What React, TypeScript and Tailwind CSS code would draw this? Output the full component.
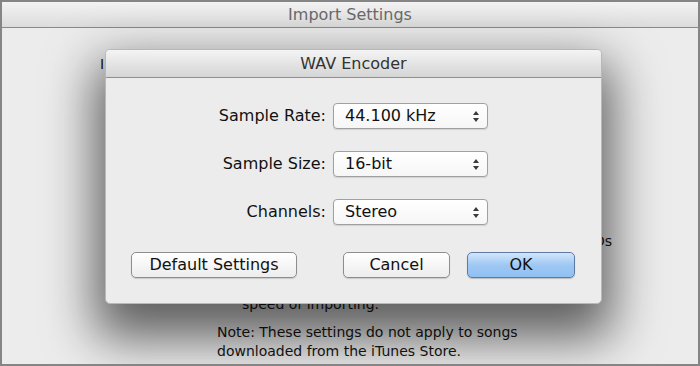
import React from "react";

const rows = [
  { label: "Sample Rate:", value: "44.100 kHz" },
  { label: "Sample Size:", value: "16-bit" },
  { label: "Channels:", value: "Stereo" },
];

const Arrows: React.FC = () => (
  <svg width="8" height="13" viewBox="0 0 8 13" className="shrink-0">
    <path d="M4 1 L7 5 L1 5 Z" fill="#3a3a3a" />
    <path d="M4 12 L7 8 L1 8 Z" fill="#3a3a3a" />
  </svg>
);

const SelectBox: React.FC<{ value: string }> = ({ value }) => (
  <div className="flex h-[26px] w-[155px] items-center justify-between rounded-[4px] border border-[#a0a0a0] bg-gradient-to-b from-white to-[#f6f6f6] pl-[11px] pr-[7px] shadow-[0_1px_1px_rgba(0,0,0,0.12)]">
    <span className="text-[16px] text-[#111]">{value}</span>
    <Arrows />
  </div>
);

const App: React.FC = () => {
  return (
    <div className="relative h-[366px] w-[700px] overflow-hidden border-2 border-[#858585] bg-[#ececec] font-['DejaVu_Sans',sans-serif]">
      {/* back window */}
      <div className="flex h-[26px] items-center justify-center border-b border-[#8a8a8a] bg-gradient-to-b from-[#f3f3f3] to-[#dcdcdc]">
        <span className="text-[16px] text-[#6a6a6a]">Import Settings</span>
      </div>
      <div className="flex flex-col text-[14px] leading-[19px] text-[#151515]">
        <div className="mt-[27px] pl-[98px]">Import Using:</div>
        <div className="mt-[158px] w-[610px] text-right">
          problems with the audio quality from Audio CDs
        </div>
        <div className="mt-[44px] pl-[240px]">speed of importing.</div>
        <div className="mt-[9px] pl-[215px]">
          Note: These settings do not apply to songs
        </div>
        <div className="pl-[215px]">downloaded from the iTunes Store.</div>
      </div>

      {/* encoder sheet */}
      <div className="absolute left-[103px] top-[47px] flex h-[255px] w-[497px] flex-col overflow-hidden rounded-[5px] border border-[#b8b8b8] bg-[#ececec] shadow-[0_24px_50px_10px_rgba(0,0,0,0.6)]">
        <div className="flex h-[28px] shrink-0 items-center justify-center border-b border-[#8f8f8f] bg-gradient-to-b from-[#f4f4f4] to-[#d5d5d5]">
          <span className="text-[16px] text-[#333]">WAV Encoder</span>
        </div>
        <div className="flex flex-col gap-[22px] pt-[25px]">
          {rows.map((r) => (
            <div key={r.label} className="flex items-center gap-[7px]">
              <div className="w-[220px] text-right text-[16px] text-[#111]">
                {r.label}
              </div>
              <SelectBox value={r.value} />
            </div>
          ))}
        </div>
        <div className="mt-[27px] flex items-center pl-[25px]">
          <button className="h-[26px] w-[166px] rounded-[5px] border border-[#8e8e8e] bg-gradient-to-b from-white to-[#ededed] text-[16px] text-[#111] shadow-[0_1px_1px_rgba(0,0,0,0.15)]">
            Default Settings
          </button>
          <button className="ml-[46px] h-[26px] w-[107px] rounded-[5px] border border-[#8e8e8e] bg-gradient-to-b from-white to-[#ededed] text-[16px] text-[#111] shadow-[0_1px_1px_rgba(0,0,0,0.15)]">
            Cancel
          </button>
          <button className="ml-[17px] h-[26px] w-[108px] rounded-[5px] border border-[#5d7aa6] bg-gradient-to-b from-[#d2e6fb] via-[#9fc8f2] to-[#8fc0f3] text-[16px] text-[#111] shadow-[0_1px_1px_rgba(0,0,0,0.2)]">
            OK
          </button>
        </div>
      </div>
    </div>
  );
};

export default App;
